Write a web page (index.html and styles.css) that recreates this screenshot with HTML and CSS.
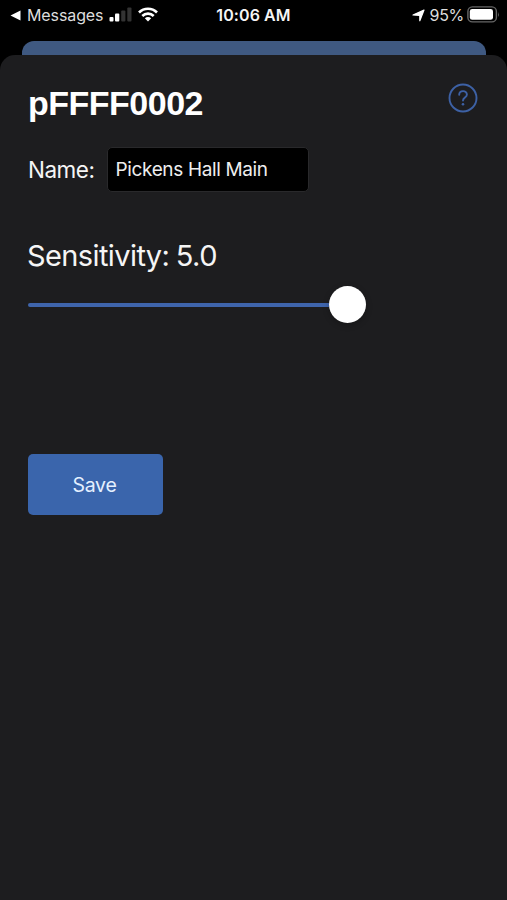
FILE: index.html
```html
<!DOCTYPE html>
<html lang="en">
<head>
<meta charset="utf-8">
<meta name="viewport" content="width=device-width, initial-scale=1">
<title>pFFFF0002</title>
<link rel="stylesheet" href="styles.css">
</head>
<body>
<header class="status">
  <div class="status-left">
    <svg class="back" width="11" height="11" viewBox="0 0 11 11"><path d="M.5 5.5 10.5.5v10z" fill="#fff"/></svg>
    <span class="app">Messages</span>
    <svg class="signal" width="24" height="15" viewBox="0 0 24 15"><rect x="0.5" y="10" width="4" height="4.5" rx="1" fill="#fff"/><rect x="6" y="6.5" width="4.3" height="8" rx="1" fill="#fff"/><rect x="12.2" y="3.5" width="4.2" height="11" rx="1" fill="#333"/><rect x="18.3" y="0.5" width="4.2" height="14" rx="1" fill="#333"/></svg>
    <svg class="wifi" width="20" height="15" viewBox="0 0 20 15" fill="none" stroke="#fff" stroke-width="2.6"><path d="M1 5.5C6 .4 14 .4 19 5.5M4.3 9C7.5 5.8 12.5 5.8 15.7 9"/><path d="M10 14.5 6.8 11.3Q10 8.6 13.2 11.3z" fill="#fff" stroke="none"/></svg>
  </div>
  <div class="time">10:06 AM</div>
  <div class="status-right">
    <svg class="location" width="13" height="13" viewBox="0 0 13 13"><path d="M12 1 7.8 11.8V6.5L1 6z" fill="#fff" stroke="#fff" stroke-width="1.2" stroke-linejoin="round"/></svg>
    <span class="percent">95%</span>
    <svg class="battery" width="33" height="17" viewBox="0 0 33 17"><rect x=".9" y=".9" width="28.5" height="15" rx="4.5" fill="none" stroke="#666" stroke-width="1.4"/><rect x="2.8" y="3" width="23.2" height="10.8" rx="2.4" fill="#fff"/><path d="M31 6q1.6 2.5 0 5z" fill="#666"/></svg>
  </div>
</header>
<div class="behind"></div>
<main class="sheet">
  <div class="heading">
    <h1>pFFFF0002</h1>
    <svg class="help" role="img" aria-label="Help" width="30" height="30" viewBox="0 0 30 30" fill="none" stroke="#3d61a5" stroke-width="1.9"><circle cx="15" cy="15" r="13.5"/><path d="M11.2 11.8C11.2 6.9 18.9 7 18.9 11.4c0 3.1-3.9 3.2-3.9 6.2" stroke-linecap="round"/><circle cx="15" cy="21.3" r="1.3" fill="#3d61a5" stroke="none"/></svg>
  </div>
  <div class="field">
    <label for="name">Name:</label>
    <input id="name" type="text" value="Pickens Hall Main">
  </div>
  <div class="sensitivity">Sensitivity: 5.0</div>
  <div class="slider"><div class="track"></div><div class="knob"></div></div>
  <button class="save" type="button">Save</button>
</main>
</body>
</html>
```
FILE: styles.css
```css
* { box-sizing: border-box; }
body {
  margin: 0;
  height: 900px;
  overflow: hidden;
  display: flex;
  flex-direction: column;
  background: #000;
  color: #f5f5f5;
  font-family: Inter, sans-serif;
}
svg { display: block; flex: none; }
.status {
  height: 41px;
  display: grid;
  grid-template-columns: 1fr auto 1fr;
  align-items: start;
  line-height: 20px;
  font-size: 16px;
}
.status-left, .status-right {
  display: flex;
  align-items: center;
  height: 20px;
  margin-top: 5px;
}
.status-left { padding-left: 10px; }
.status-right { justify-content: flex-end; padding-right: 7px; }
.app { margin-left: 6px; width: 77px; color: #ddd; letter-spacing: -.1px; white-space: nowrap; }
.signal { margin-left: 5px; margin-top: -2px; }
.wifi { margin-left: 5px; margin-top: -2px; }
.time { margin-top: 5px; font-weight: 600; letter-spacing: .1px; }
.percent { margin: 0 3px 0 5px; color: #ddd; letter-spacing: -.3px; }
.battery { margin-top: -2px; }
.behind {
  height: 14px;
  margin: 0 21px 0 22px;
  border-radius: 12px 12px 0 0;
  background: #3f5981;
}
.sheet {
  flex: 1;
  padding: 28px 28px 0;
  border-radius: 15px 15px 0 0;
  background: #1d1d1f;
}
.heading { display: flex; justify-content: space-between; height: 64px; }
.help { margin-right: 1px; }
h1 {
  margin: 0;
  font: bold 34px/40px "Liberation Sans", sans-serif;
  letter-spacing: -.5px;
  color: #fff;
}
.field { display: flex; align-items: center; height: 45px; }
label { width: 78.5px; font-size: 22.5px; letter-spacing: -.5px; }
input {
  width: 202px;
  height: 45px;
  padding: 0 8px;
  border: 1px solid #29292b;
  border-radius: 5px;
  background: #000;
  color: #eee;
  font: 19px Inter, sans-serif;
  letter-spacing: -.36px;
  outline: none;
}
.sensitivity { margin-top: 45px; height: 38px; font-size: 29px; line-height: 38px; letter-spacing: -.6px; word-spacing: -1px; margin-left: -1px; }
.slider { display: flex; align-items: center; width: 338px; height: 37px; margin-top: 11px; }
.track { flex: 1; height: 4px; border-radius: 2px 0 0 2px; background: #3f65ac; }
.knob { width: 37px; height: 37px; border-radius: 50%; background: #fff; box-shadow: 0 2px 6px rgba(0, 0, 0, .25); }
.save {
  display: block;
  width: 135px;
  height: 61px;
  margin-top: 131px;
  padding: 1px 2px 0 0;
  border: 0;
  border-radius: 5px;
  background: #3a65ac;
  color: #e4f0ff;
  font: 19.5px Inter, sans-serif;
  letter-spacing: -.25px;
}
```
